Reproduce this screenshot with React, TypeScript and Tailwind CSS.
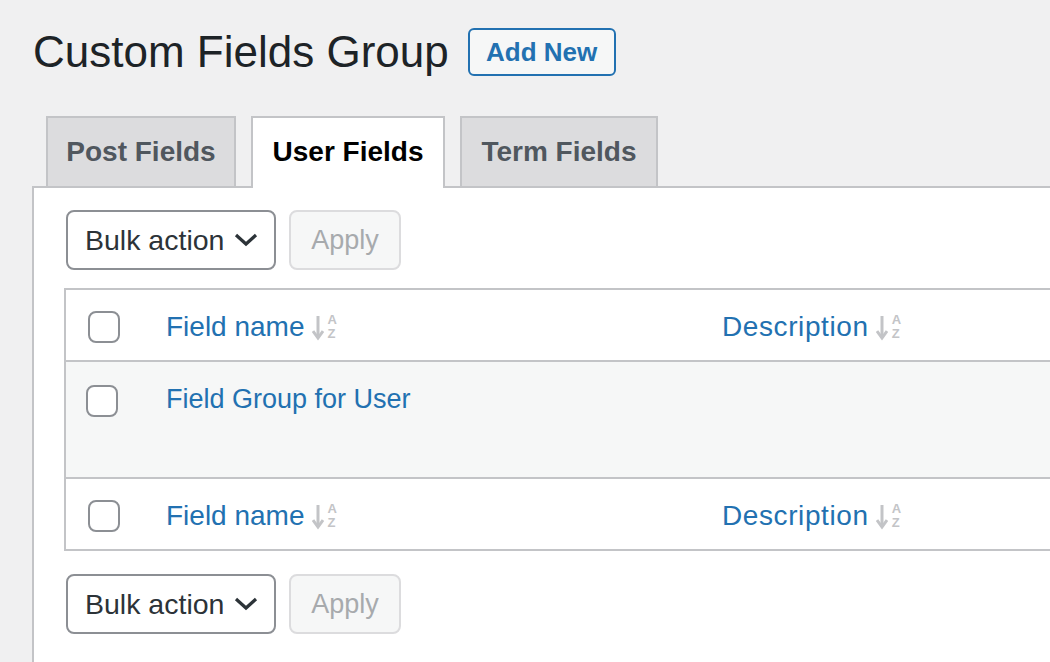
import React from "react";

const font = { fontFamily: '"Liberation Sans", Arial, sans-serif' };

function SortIcon() {
  return (
    <span className="ml-[7px] inline-flex items-center text-[#c3c4c7]">
      <svg width="12" height="28" viewBox="0 0 12 28" className="block">
        <line x1="6" y1="3" x2="6" y2="24" stroke="#c3c4c7" strokeWidth="3" />
        <path d="M1 18 L6 25 L11 18" fill="none" stroke="#c3c4c7" strokeWidth="3" />
      </svg>
      <span className="ml-[4px] flex flex-col text-[13px] font-bold leading-[14px]">
        <span>A</span>
        <span>Z</span>
      </span>
    </span>
  );
}

function Checkbox() {
  return <span className="block h-[32px] w-[32px] rounded-[8px] border-2 border-[#8c8f94] bg-white" />;
}

function BulkRow() {
  return (
    <div className="flex items-center">
      <div className="ml-[2px] flex h-[60px] w-[210px] items-center justify-between rounded-[8px] border-2 border-[#8c8f94] bg-white pl-[17px] pr-[15px] text-[28.5px] text-[#2c3338]">
        <span>Bulk action</span>
        <svg width="26" height="16" viewBox="0 0 26 16">
          <path d="M3 3 L13 12 L23 3" fill="none" stroke="#2c3338" strokeWidth="3.2" />
        </svg>
      </div>
      <div className="ml-[13px] flex h-[60px] w-[112px] items-center justify-center rounded-[8px] border-2 border-[#dcdcde] bg-[#f6f7f7] text-[27px] text-[#a7aaad]">
        Apply
      </div>
    </div>
  );
}

function HeadRow({ border }: { border: string }) {
  return (
    <div className={`flex h-[72px] items-center bg-white ${border}`}>
      <div className="w-[100px] pl-[22px] pt-[3px]">
        <Checkbox />
      </div>
      <div className="flex w-[556px] items-center pt-[3px] text-[28px] text-[#2271b1]">
        Field name
        <SortIcon />
      </div>
      <div className="flex items-center pt-[3px] text-[28px] tracking-[0.6px] text-[#2271b1]">
        Description
        <SortIcon />
      </div>
    </div>
  );
}

export default function App() {
  return (
    <div className="h-[662px] w-[1050px] overflow-hidden bg-[#f0f0f1] pl-[32px] pt-[28px]" style={font}>
      <div className="flex items-center">
        <h1 className="ml-[1px] text-[44px] leading-[48px] text-[#1d2327]">Custom Fields Group</h1>
        <div className="ml-[19px] flex h-[48px] w-[148px] items-center justify-center rounded-[6px] border-2 border-[#2271b1] bg-[#f6f7f7] text-[26px] font-bold text-[#2271b1]">
          Add New
        </div>
      </div>

      <div className="mt-[40px] flex items-end pl-[14px]">
        <div className="flex h-[70px] w-[190px] items-center justify-center border-2 border-b-0 border-[#c3c4c7] bg-[#dcdcde] text-[28px] font-bold text-[#50575e]">
          Post Fields
        </div>
        <div className="relative z-10 -mb-[2px] ml-[15px] flex h-[72px] w-[194px] items-center justify-center border-2 border-b-0 border-[#c3c4c7] bg-white pb-[2px] text-[28px] font-bold text-black">
          User Fields
        </div>
        <div className="ml-[15px] flex h-[70px] w-[198px] items-center justify-center border-2 border-b-0 border-[#c3c4c7] bg-[#dcdcde] text-[28px] font-bold text-[#50575e]">
          Term Fields
        </div>
      </div>

      <div className="w-[1100px] border-l-2 border-t-2 border-[#c3c4c7] bg-white pb-[40px] pl-[30px] pt-[22px]">
        <BulkRow />
        <div className="mt-[18px] border-2 border-r-0 border-[#c3c4c7]">
          <HeadRow border="border-b-2 border-[#c3c4c7]" />
          <div className="flex h-[115px] items-start bg-[#f6f7f7]">
            <div className="w-[100px] pl-[20px] pt-[23px]">
              <Checkbox />
            </div>
            <div className="pt-[21px] text-[27px] leading-[32px] text-[#2271b1]">Field Group for User</div>
          </div>
          <HeadRow border="border-t-2 border-[#c3c4c7]" />
        </div>
        <div className="mt-[23px]">
          <BulkRow />
        </div>
      </div>
    </div>
  );
}
